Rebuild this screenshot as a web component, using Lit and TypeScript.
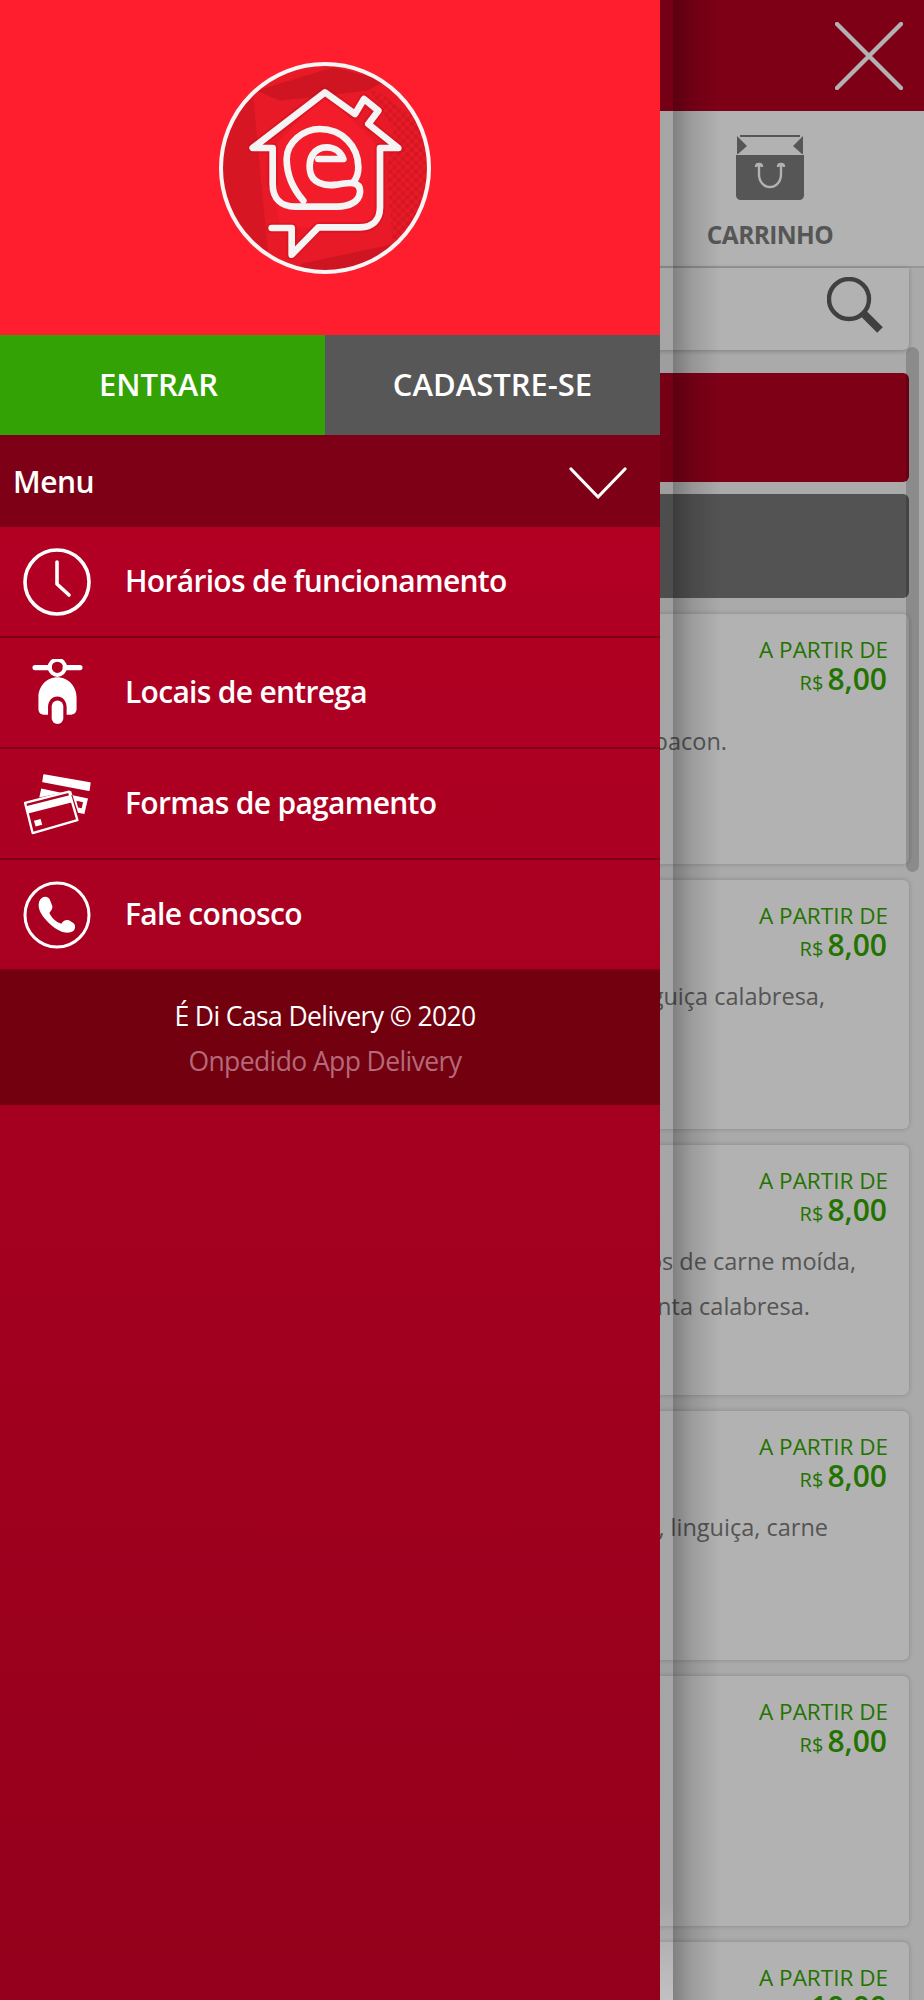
import {LitElement, html, css, svg} from 'lit';
import {customElement} from 'lit/decorators.js';

const clockIcon = svg`<circle cx="36" cy="36" r="32" fill="none" stroke="#fff" stroke-width="3.6"/>
  <path d="M36 16V38L48 49" fill="none" stroke="#fff" stroke-width="3.6" stroke-linecap="round" stroke-linejoin="round"/>`;

const scooterIcon = svg`<path d="M75 416H118M166 416H210" stroke="#fff" stroke-width="16" stroke-linecap="round"/>
  <circle cx="142" cy="415" r="23" fill="none" stroke="#fff" stroke-width="12"/>
  <path d="M142 445C172 445 200 470 200 505V540C200 552 192 558 180 558H170V535C170 517 158 503 142 503C126 503 114 517 114 535V558H104C92 558 85 552 85 540V505C85 470 112 445 142 445Z" fill="#fff"/>
  <rect x="125" y="515" width="35" height="71" rx="17.5" fill="#fff"/>`;

const cardsIcon = svg`<path d="M102 74L241 98L238 120L99 94Z" fill="#fff" stroke="#fff" stroke-width="4" stroke-linejoin="round"/>
  <path d="M94 115L235 145L224 192L205 188L184 122L88 142Z" fill="#fff"/>
  <path d="M200 152L220 156L216 174L205 172Z" fill="#ae0021"/>
  <path d="M45 158L178 124L203 210L68 249Z" fill="#ae0021" stroke="#fff" stroke-width="7" stroke-linejoin="round"/>
  <path d="M48 168L182 134L188 156L54 190Z" fill="#fff"/>
  <path d="M72 212L92 207L97 224L77 229Z" fill="#fff"/>`;

const phoneIcon = svg`<circle cx="142" cy="497" r="96" fill="none" stroke="#fff" stroke-width="9"/>
  <path d="M88 458C94 440 114 438 120 450L128 470C130 478 123 485 119 491C126 506 140 519 155 523C160 515 168 510 178 513L192 522C198 528 198 540 190 546C175 555 150 550 125 528C100 505 82 482 88 458Z" fill="#fff"/>`;

interface MenuItem {
  label: string;
  icon: unknown;
  box: string;
  w: number;
  h: number;
}

const menu: MenuItem[] = [
  {label: 'Horários de funcionamento', icon: clockIcon, box: '0 0 72 72', w: 72, h: 72},
  {label: 'Locais de entrega', icon: scooterIcon, box: '60 390 165 205', w: 55, h: 68},
  {label: 'Formas de pagamento', icon: cardsIcon, box: '40 65 206 190', w: 69, h: 63},
  {label: 'Fale conosco', icon: phoneIcon, box: '40 395 204 204', w: 68, h: 68},
];

interface Product {
  price: string;
  top: number;
  lines: [string, number][];
}

// lines: text plus how far it sits from the card's right edge
const products: Product[] = [
  {price: '8,00', top: 21, lines: [['Molho, mussarela e bacon.', 182]]},
  {price: '8,00', top: 10, lines: [['Molho, mussarela, linguiça calabresa,', 84]]},
  {price: '8,00', top: 10, lines: [['Molho, mussarela, pedaços de carne moída,', 53], ['cebola e pimenta calabresa.', 99]]},
  {price: '8,00', top: 10, lines: [['Molho, mussarela, linguiça, carne', 81]]},
  {price: '8,00', top: 10, lines: []},
  {price: '10,00', top: 10, lines: []},
];

@customElement('app-root')
export class AppRoot extends LitElement {
  static styles = css`
    :host {
      display: block;
      position: relative;
      width: 924px;
      height: 2000px;
      overflow: hidden;
      background: #f4f4f4;
      font-family: 'Open Sans', 'Noto Sans', sans-serif;
    }

    .topbar {
      height: 111px;
      background: #b50021;
      display: flex;
      justify-content: flex-end;
      align-items: center;
      padding-right: 21px;
    }

    .nav {
      height: 155px;
      background: #fff;
      border-bottom: 2px solid #d9d9d9;
      display: flex;
      justify-content: flex-end;
    }

    .tab {
      width: 308px;
      display: flex;
      flex-direction: column;
      align-items: center;
      padding-top: 23px;
      font-size: 24.5px;
      line-height: 30px;
      font-weight: 700;
      letter-spacing: -0.6px;
      color: #7c7c7c;
    }

    .tab svg {
      margin-bottom: 18px;
    }

    .content {
      display: flex;
      flex-direction: column;
      padding: 0 15px;
    }

    .search {
      height: 82px;
      background: #fff;
      border-radius: 0 0 6px 6px;
      box-shadow: 0 1px 5px rgba(0, 0, 0, 0.25);
      display: flex;
      justify-content: flex-end;
      align-items: center;
      padding-right: 26px;
      margin-bottom: 23px;
    }

    .search svg {
      margin-bottom: 8px;
    }

    .bar {
      border-radius: 6px;
    }

    .bar.red {
      height: 109px;
      background: #b50021;
      margin-bottom: 12px;
    }

    .bar.gray {
      height: 104px;
      background: #777;
      margin-bottom: 16px;
    }

    .card {
      height: 249.5px;
      box-sizing: border-box;
      flex: none;
      margin-bottom: 16px;
      background: #fff;
      border-radius: 6px;
      box-shadow: 0 0 5px rgba(0, 0, 0, 0.22);
      padding-top: 22px;
    }

    .price {
      display: flex;
      flex-direction: column;
      align-items: flex-end;
      padding-right: 21px;
      color: #33a500;
    }

    .from {
      font-size: 22.5px;
      line-height: 28px;
      font-weight: 500;
    }

    .value {
      display: flex;
      align-items: baseline;
      gap: 4px;
      line-height: 30px;
      font-size: 30px;
      font-weight: 600;
      margin-right: 1px;
    }

    .value small {
      font-size: 20px;
      font-weight: 400;
    }

    .desc {
      font-size: 23.5px;
      line-height: 45px;
      color: #7a7a7a;
      text-align: right;
      white-space: nowrap;
    }

    .scroll {
      position: absolute;
      top: 347px;
      left: 906px;
      width: 13px;
      height: 525px;
      border-radius: 7px;
      background: rgba(0, 0, 0, 0.18);
    }

    .overlay {
      position: absolute;
      inset: 0;
      background: rgba(0, 0, 0, 0.3);
    }

    .strip {
      position: absolute;
      top: 0;
      bottom: 0;
      left: 660px;
      width: 13px;
      background: linear-gradient(to bottom, rgba(0, 0, 0, 0.07) 95%, rgba(255, 255, 255, 0.2) 100%);
    }

    .shade {
      position: absolute;
      top: 0;
      bottom: 0;
      left: 673px;
      width: 48px;
      background: linear-gradient(to right, rgba(0, 0, 0, 0.28), rgba(0, 0, 0, 0.12) 40%, rgba(0, 0, 0, 0));
    }

    .drawer {
      position: absolute;
      top: 0;
      left: 0;
      bottom: 0;
      width: 660px;
      display: flex;
      flex-direction: column;
      background: linear-gradient(to bottom, #b20023 26%, #94001b);
      color: #fff;
    }

    .brand {
      height: 335px;
      background: #ff1e2d;
      display: flex;
      align-items: center;
      justify-content: center;
      padding-right: 10px;
    }

    .auth {
      height: 100px;
      display: flex;
      font-size: 31px;
      font-weight: 600;
      padding-bottom: 0;
    }

    .auth div {
      display: flex;
      align-items: center;
      justify-content: center;
      padding-bottom: 2px;
      box-sizing: border-box;
    }

    .enter {
      width: 325px;
      padding-right: 8px;
      background: #33a204;
    }

    .signup {
      flex: 1;
      background: #575757;
    }

    .menu-head {
      height: 92px;
      background: #7d0017;
      display: flex;
      align-items: center;
      justify-content: space-between;
      padding: 0 33px 0 13px;
      font-size: 30px;
      font-weight: 600;
      letter-spacing: -0.5px;
    }

    .menu-head svg {
      margin-top: 3px;
    }

    .row {
      height: 111px;
      box-sizing: border-box;
      border-bottom: 2px solid #7d0017;
      display: flex;
      align-items: center;
      font-size: 30px;
      font-weight: 600;
      letter-spacing: -0.7px;
    }

    .row span {
      margin-bottom: 2px;
    }

    .row:last-of-type {
      border-bottom: none;
    }

    .row .icon {
      width: 125px;
      flex: none;
      display: flex;
      justify-content: center;
      padding-right: 11px;
      box-sizing: border-box;
    }

    .foot {
      height: 134px;
      box-sizing: border-box;
      background: #72000f;
      display: flex;
      flex-direction: column;
      justify-content: center;
      align-items: center;
      padding: 2px 10px 0 0;
      font-size: 26.5px;
      line-height: 45px;
      letter-spacing: -0.6px;
    }

    .foot span {
      color: #b5697a;
    }
  `;

  renderLogo() {
    return html`<svg width="220" height="220" viewBox="105 82 660 660">
      <defs>
        <clipPath id="disc"><circle cx="435" cy="412" r="312"></circle></clipPath>
        <pattern id="check" width="26" height="26" patternUnits="userSpaceOnUse">
          <rect width="13" height="13" fill="#c2111e"></rect>
          <rect x="13" y="13" width="13" height="13" fill="#c2111e"></rect>
        </pattern>
      </defs>
      <circle cx="435" cy="412" r="312" fill="#e81a27"></circle>
      <g clip-path="url(#disc)">
        <path d="M120 260L220 200L240 420L270 720L120 600Z" fill="#d61623"></path>
        <path d="M230 180L460 110L620 150L560 180L300 210Z" fill="#d01522"></path>
        <path d="M560 160L760 300L760 560L640 660L620 420L640 300Z" fill="url(#check)" opacity="0.45"></path>
        <path d="M360 700L640 640L560 740H400Z" fill="#d01522"></path>
      </g>
      <path d="M278 352L435 185L600 352V530C600 570 575 590 540 590H300L278 460Z" fill="#f21c2b"></path>
      <g fill="none" stroke="#c20f1c" stroke-opacity="0.35" stroke-width="32" stroke-linecap="round" stroke-linejoin="round">
        <path d="M278 460L278 352L218 352L435 185L525 250L552 205L595 240L565 280L655 352L600 352L600 530C600 570 575 590 540 590L415 590L335 672L335 592L275 592"></path>
      </g>
      <g fill="none" stroke="#f4f4f4" stroke-width="20" stroke-linecap="round" stroke-linejoin="round">
        <path d="M275 592L335 592L335 672L415 590L540 590C575 590 600 570 600 530L600 352L655 352L565 280L595 240L552 205L525 250L435 185L218 352L278 352L278 460C278 505 305 528 345 528L470 528C505 528 537 515 540 485C543 450 505 455 470 462C430 468 395 455 390 420C385 385 400 350 440 350C462 350 482 362 490 385L415 385"></path>
        <path d="M370 510C335 470 320 430 320 385C320 335 370 295 420 295C485 295 535 345 535 410C535 428 530 442 522 452"></path>
      </g>
      <circle cx="435" cy="412" r="312" fill="none" stroke="#f6f6f6" stroke-width="12"></circle>
    </svg>`;
  }

  renderDrawer() {
    return html`<aside class="drawer">
      <div class="brand">${this.renderLogo()}</div>
      <div class="auth">
        <div class="enter">ENTRAR</div>
        <div class="signup">CADASTRE-SE</div>
      </div>
      <div class="menu-head">
        Menu
        <svg width="58" height="32" viewBox="0 0 58 32">
          <path d="M2 2L29 30L56 2" fill="none" stroke="#fff" stroke-width="3.2" stroke-linecap="round" stroke-linejoin="round"></path>
        </svg>
      </div>
      ${menu.map(
        (m) => html`<div class="row">
          <div class="icon">
            <svg width=${m.w} height=${m.h} viewBox=${m.box}>${m.icon}</svg>
          </div>
          <span>${m.label}</span>
        </div>`
      )}
      <div class="foot">
        É Di Casa Delivery © 2020
        <span>Onpedido App Delivery</span>
      </div>
    </aside>`;
  }

  renderProduct(p: Product) {
    return html`<div class="card">
      <div class="price">
        <div class="from">A PARTIR DE</div>
        <div class="value"><small>R$</small>${p.price}</div>
      </div>
      <div style="margin-top:${p.top}px">
        ${p.lines.map(
          ([text, right]) => html`<div class="desc" style="padding-right:${right}px">${text}</div>`
        )}
      </div>
    </div>`;
  }

  render() {
    return html`
      <div class="topbar">
        <svg width="68" height="68" viewBox="0 0 68 68">
          <path d="M2 2L66 66M66 2L2 66" stroke="#fff" stroke-width="4.4" stroke-linecap="round"></path>
        </svg>
      </div>
      <nav class="nav">
        <div class="tab">
          <svg width="70" height="68" viewBox="0 0 70 68">
            <path d="M5 1H65V3H5Z" fill="#7c7c7c"></path>
            <path d="M2 2L12 12L3 20H2ZM68 2L58 12L67 20H68Z" fill="#7c7c7c"></path>
            <path d="M1 21H69V61C69 64 67 66 64 66H6C3 66 1 64 1 61Z" fill="#7c7c7c"></path>
            <path d="M21 33C21 29 27 29 27 33M43 33C43 29 49 29 49 33M24 31V40C24 48 29 53 35 53C41 53 46 48 46 40V31" fill="none" stroke="#fff" stroke-width="2.4"></path>
          </svg>
          CARRINHO
        </div>
      </nav>
      <main class="content">
        <div class="search">
          <svg width="56" height="56" viewBox="0 0 56 56">
            <circle cx="22" cy="22" r="20" fill="none" stroke="#5c5c5c" stroke-width="4.4"></circle>
            <path d="M36 36L53 53" stroke="#5c5c5c" stroke-width="8"></path>
          </svg>
        </div>
        <div class="bar red"></div>
        <div class="bar gray"></div>
        ${products.map((p) => this.renderProduct(p))}
      </main>
      <div class="scroll"></div>
      <div class="overlay"></div>
      <div class="strip"></div>
      <div class="shade"></div>
      ${this.renderDrawer()}
    `;
  }
}
